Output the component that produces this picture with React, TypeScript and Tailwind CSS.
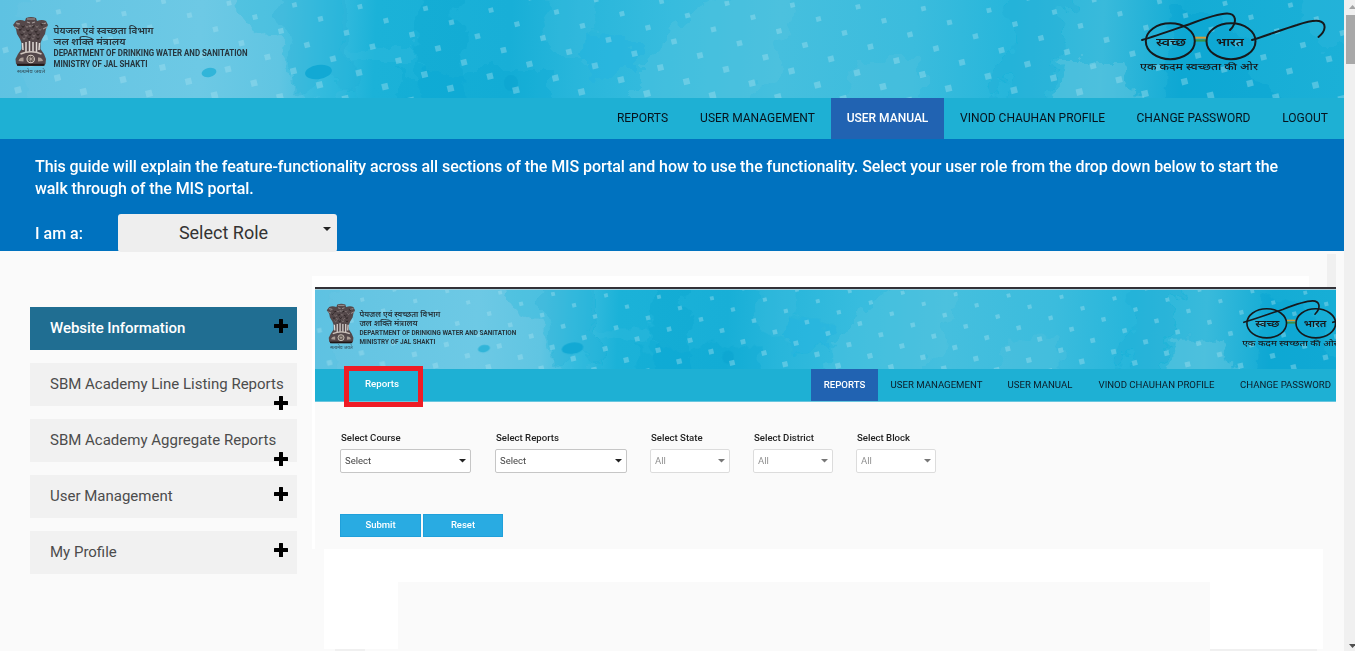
import React from "react";

const HINDI = "Roboto, 'Noto Sans Devanagari', 'Noto Sans', sans-serif";

function Emblem() {
  const manes = [
    [20, 30], [24, 32], [28, 31], [32, 31], [36, 32], [40, 30], [22, 35], [26, 36], [30, 35], [34, 36], [38, 35],
    [18, 25], [23, 27], [27, 27], [33, 27], [37, 27], [42, 25], [24, 39], [29, 39], [33, 39], [38, 39],
  ];
  return (
    <g>
      <path
        d="M26 18 Q31 16 36 18 L37 21 Q42 19 46 21 L48 25 L46 29 L45 34 L42 39 L40.500 43 L40.500 49 L44 54 L46 59 L45.500 64 L43 66 L19 66 L16 64 L15.500 59 L18 54 L21.500 49 L21.500 43 L20 39 L17 34 L16 29 L13 25 L16 21 Q20 19 25 21 Z"
        fill="#54484a"
      />
      <path d="M27 19h8M27 22l3 1m5-1l-3 1M29 26h4M16 23l4 1M46 23l-4 1M15 27l4 2M47 27l-4 2" stroke="#a39a98" strokeWidth="1.1" />
      {manes.map(([x, y], i) => (
        <path key={i} d={`M${x - 1.5} ${y - 1}q1.5 2.6 3 0`} fill="none" stroke={i % 2 ? "#8f8482" : "#1c1514"} strokeWidth="0.9" />
      ))}
      <path d="M22.500 43l.5 7M26 42v10M29.500 41v11M33 42v10M36.500 42v10M39.500 43l-.5 7" stroke="#ded8d5" strokeWidth="1.5" />
      <path d="M20.500 54q10.500-4.500 21 0" stroke="#cec4bd" strokeWidth="1.600" fill="none" />
      <circle cx="30.700" cy="59" r="3.700" fill="#4b403c" stroke="#d8cec5" strokeWidth="1.100" />
      <path d="M27.500 59h6.500M30.700 55.800v6.500M28.500 56.800l4.500 4.500M33 56.800l-4.500 4.500" stroke="#c9beb5" strokeWidth="0.600" />
      <path d="M18.500 61q1-4 5-3.500v4zM43 61q-1-4-5-3.500v4z" fill="#a99c94" />
      <path d="M17 64.800h27.500" stroke="#211817" strokeWidth="2" />
      <text x="17" y="72.500" fontSize="5" textLength="28" lengthAdjust="spacingAndGlyphs" fill="#2f4550" fontFamily={HINDI}>सत्यमेव जयते</text>
    </g>
  );
}

function Glasses() {
  return (
    <g fill="none" stroke="#16191c" strokeWidth="2" strokeLinecap="round">
      <path d="M1195 37.700h11" stroke="#d79a35" strokeWidth="2" strokeLinecap="butt" />
      <path d="M1195 40.500h11" stroke="#379247" strokeWidth="2.200" strokeLinecap="butt" />
      <ellipse cx="1170.300" cy="41.200" rx="24.500" ry="18" />
      <ellipse cx="1231" cy="41.200" rx="24.500" ry="18" />
      <path d="M1142 40C1156 36 1174 29.500 1190 24C1203 19 1218 13.500 1227 13.500C1236 13.500 1238 22 1230 30" />
      <path d="M1252 40C1265 36 1284 29 1297 25C1306 22 1314 20 1319 21C1327 23 1326 31 1318.500 37" />
      <g fill="#16191c" stroke="none" fontFamily={HINDI} fontWeight="600">
        <text x="1156" y="45.500" fontSize="11.500" textLength="30" lengthAdjust="spacingAndGlyphs">स्वच्छ</text>
        <text x="1216" y="45.500" fontSize="11.500" textLength="28" lengthAdjust="spacingAndGlyphs">भारत</text>
        <text x="1140" y="69.500" fontSize="8.800" fontWeight="500" textLength="118" lengthAdjust="spacingAndGlyphs">एक कदम स्वच्छता की ओर</text>
      </g>
    </g>
  );
}

function Banner({ id, width, shift = 0 }: { id: string; width: number; shift?: number }) {
  const dots: { x: number; y: number; s: number }[] = [];
  for (let i = -8; i < 18; i++) {
    for (let j = -4; j < 9; j++) {
      const x = 360 + 65.5 * i + 26 * j;
      const y = 6.7 + 1.75 * i + 13.9 * j;
      if (x > -10 && x < width + 10 && y > -6 && y < 104) dots.push({ x, y, s: 4.6 + y * 0.021 });
    }
  }
  return (
    <svg className="block h-full w-full" viewBox={`0 0 ${width} 98`} preserveAspectRatio="xMinYMin slice">
      <defs>
        <linearGradient id={`${id}-base`} gradientUnits="userSpaceOnUse" x1="0" y1="0" x2="1344" y2="60">
          <stop offset="0" stopColor="#62c3e2" />
          <stop offset="0.150" stopColor="#6dc9e5" />
          <stop offset="0.210" stopColor="#60c5e2" />
          <stop offset="0.240" stopColor="#3fbee0" />
          <stop offset="0.280" stopColor="#1bb2d8" />
          <stop offset="0.380" stopColor="#18afd7" />
          <stop offset="0.430" stopColor="#28b6db" />
          <stop offset="0.500" stopColor="#37bcde" />
          <stop offset="0.580" stopColor="#45bfde" />
          <stop offset="0.680" stopColor="#3bbcdd" />
          <stop offset="0.750" stopColor="#27b6db" />
          <stop offset="0.820" stopColor="#39badb" />
          <stop offset="0.880" stopColor="#14acd5" />
          <stop offset="1" stopColor="#1bb0d7" />
        </linearGradient>
        <filter id={`${id}-water`} x="-20%" y="-20%" width="140%" height="140%">
          <feTurbulence type="fractalNoise" baseFrequency="0.035" numOctaves="4" seed="5" result="n" />
          <feDisplacementMap in="SourceGraphic" in2="n" scale="44" xChannelSelector="R" yChannelSelector="G" />
        </filter>
      </defs>
      <rect width="1400" height="98" fill={`url(#${id}-base)`} />
      <g filter={`url(#${id}-water)`}>
        <path d="M-20-20h60l-20 60 10 80h-50z" fill="#55bfe0" opacity="0.300" />
        <path d="M235-20L340-20 350 120 320 120 285 60 245 25Z" fill="#25b6db" opacity="0.300" />
        <path d="M275-20L350-20 350 90 295 85Z" fill="#16abd5" opacity="0.250" />
        <path d="M420-20h40l10 140h-55z" fill="#059fce" opacity="0.220" />
        <path d="M350 45h65v18h-65z" fill="#38bcdd" opacity="0.300" />
        <path d="M400 70h150v60h-150z" fill="#08a3d0" opacity="0.220" />
        <path d="M540-20h60l-10 80h-40z" fill="#43bfe0" opacity="0.250" />
        <path d="M590 40h45v35h-45z" fill="#20b3df" opacity="0.450" />
        <path d="M640 60L740-20 800-20 780 70 720 120H640Z" fill="#5dc5e0" opacity="0.350" />
        <path d="M860 60h60v60h-80z" fill="#5dc5e0" opacity="0.250" />
        <path d="M1010-20h60l-8 60-10 80h-60l15-60z" fill="#15acd5" opacity="0.300" />
        <path d="M1065 60h60l15 60h-80z" fill="#65c8e1" opacity="0.450" />
        <path d="M1170 10h50l60 110h-120z" fill="#089fcf" opacity="0.300" />
        <path d="M1290-20h80v60h-60z" fill="#45bfdf" opacity="0.200" />
      </g>
      <ellipse cx="209" cy="72.500" rx="7.500" ry="4.500" fill="#31b5d9" transform="rotate(-12 209 72.500)" />
      <ellipse cx="318.500" cy="72" rx="13.500" ry="7" fill="#12a9d4" transform="rotate(-8 318.500 72)" />
      <ellipse cx="511" cy="83" rx="7" ry="8" fill="#0da5d0" opacity="0.700" />
      {dots.map((d, i) => (
        <rect key={i} x={-d.s / 2} y={-d.s / 2} width={d.s} height={d.s} fill="#a4e2ef" opacity="0.400" transform={`translate(${d.x} ${d.y}) rotate(-14)`} />
      ))}
      <g transform={`translate(${shift ? 1.5 : 0} 0)`}>
        <Emblem />
        <g fill="#26353d" fontFamily={HINDI}>
          <text x="53.500" y="34" fontSize="9.500" fontWeight="600" textLength="100" lengthAdjust="spacingAndGlyphs">पेयजल एवं स्वच्छता विभाग</text>
          <text x="53.500" y="45" fontSize="9.500" fontWeight="600" textLength="72" lengthAdjust="spacingAndGlyphs">जल शक्ति मंत्रालय</text>
          <text x="53.500" y="56" fontSize="9" fontWeight="700" textLength="194" lengthAdjust="spacingAndGlyphs">DEPARTMENT OF DRINKING WATER AND SANITATION</text>
          <text x="53.500" y="66.800" fontSize="9" fontWeight="700" textLength="94" lengthAdjust="spacingAndGlyphs">MINISTRY OF JAL SHAKTI</text>
        </g>
      </g>
      <g transform={`translate(${shift} 0)`}>
        <Glasses />
      </g>
    </svg>
  );
}

function Caret({ className }: { className: string }) {
  return (
    <svg className={className} viewBox="0 0 8 4">
      <path d="M0 0h8L4 4z" fill="currentColor" />
    </svg>
  );
}

function Field({ label, value, box, muted }: { label: string; value: string; box: string; muted?: boolean }) {
  return (
    <div className={box}>
      <div className="h-[18px] whitespace-nowrap pl-px text-[9.600px] font-medium leading-[13px] text-[#222]">{label}</div>
      <div
        className={`flex h-6 items-center justify-between rounded-[2px] border bg-white pl-1 pr-1 text-[9.500px] ${
          muted ? "border-[#dcdcdc] text-[#909090]" : "border-[#c6c6c6] text-[#444]"
        }`}
      >
        <span>{value}</span>
        <Caret className={`h-[3.500px] w-[7px] ${muted ? "text-[#777]" : "text-[#222]"}`} />
      </div>
    </div>
  );
}

const nav = [
  { label: "REPORTS", w: "w-[83px]" },
  { label: "USER MANAGEMENT", w: "w-[147px]" },
  { label: "USER MANUAL", w: "w-[113px]", active: true },
  { label: "VINOD CHAUHAN PROFILE", w: "w-[177px]" },
  { label: "CHANGE PASSWORD", w: "w-[145px]" },
  { label: "LOGOUT", w: "w-[78px]" },
];

const innerNav = [
  { label: "REPORTS", w: "w-[67px]", active: true },
  { label: "USER MANAGEMENT", w: "w-[117px]" },
  { label: "USER MANUAL", w: "w-[90px]" },
  { label: "VINOD CHAUHAN PROFILE", w: "w-[143px]" },
  { label: "CHANGE PASSWORD", w: "w-[108px] pl-[7px]" },
];

const menu = [
  { label: "Website Information", active: true },
  { label: "SBM Academy Line Listing Reports", low: true },
  { label: "SBM Academy Aggregate Reports", low: true },
  { label: "User Management" },
  { label: "My Profile" },
];

function Preview() {
  return (
    <div className="flex h-[376px] w-[1024px] flex-col overflow-hidden">
      <div className="h-[11px] w-[997px] shrink-0 bg-white" />
      <div className="flex h-[262px] shrink-0">
        <div className="w-[3px] shrink-0 bg-white" />
        <div className="flex w-[1021px] flex-col border-t-2 border-[#333238] bg-[#fafafa]">
          <div className="h-px shrink-0 bg-[#a5cfdc]" />
          <div className="h-[79px] shrink-0">
            <Banner id="inner" width={1263} shift={7} />
          </div>
          <div className="flex h-[33px] shrink-0 justify-between border-b border-[#68c6df] bg-[#1eb0d4]">
            <div className="relative w-[138px]">
              <div className="absolute left-[29px] top-[-3px] flex h-[41px] w-[79px] items-center justify-center border-[5px] border-[#ee1c25] pb-1 pr-[3px] text-[9.700px] font-medium text-white">
                Reports
              </div>
            </div>
            <div className="flex">
              {innerNav.map((n) => (
                <div
                  key={n.label}
                  className={`${n.w} flex items-center justify-center whitespace-nowrap text-[9.600px] ${
                    n.active ? "bg-[#2163b2] font-medium text-white" : "text-[#0b1a26]"
                  }`}
                >
                  {n.label}
                </div>
              ))}
            </div>
          </div>
          <div className="flex pl-[25px] pt-[29px]">
            <Field label="Select Course" value="Select" box="w-[131px] mr-6" />
            <Field label="Select Reports" value="Select" box="w-[132px] mr-[23px]" />
            <Field label="Select State" value="All" box="w-[80px] mr-[23px]" muted />
            <Field label="Select District" value="All" box="w-[80px] mr-[23px]" muted />
            <Field label="Select Block" value="All" box="w-[80px]" muted />
          </div>
          <div className="mt-[41px] flex gap-0.5 pl-[25px] text-[9.500px] font-medium text-white">
            <div className="flex h-[23px] w-[81px] items-center justify-center border border-[#20a0da] bg-[#29abe2]">Submit</div>
            <div className="flex h-[23px] w-[80px] items-center justify-center border border-[#20a0da] bg-[#29abe2]">Reset</div>
          </div>
        </div>
      </div>
      <div className="ml-3 flex h-[100px] w-[999px] shrink-0 flex-col bg-white pl-[74px] pt-[33px]">
        <div className="w-[812px] grow bg-[#fafafa]" />
      </div>
      <div className="flex h-[2px] shrink-0 pl-[23px]">
        <div className="w-[30px] bg-[#f0f0f0]" />
        <div className="ml-[845px] w-[107px] bg-[#f0f0f0]" />
      </div>
    </div>
  );
}

export default function App() {
  return (
    <div className="flex h-[651px] w-[1355px] overflow-hidden bg-[#fafafa] font-[Roboto,sans-serif]">
      <main className="flex w-[1344px] shrink-0 flex-col">
        <header>
          <div className="h-[98px]">
            <Banner id="top" width={1344} />
          </div>
          <nav className="flex h-[41px] justify-end bg-[#1eb0d4]">
            {nav.map((n) => (
              <a
                key={n.label}
                className={`${n.w} flex items-center justify-center whitespace-nowrap pb-px text-[12px] ${
                  n.active ? "bg-[#2163b2] font-medium text-white" : "text-[#06121c]"
                }`}
              >
                {n.label}
              </a>
            ))}
          </nav>
        </header>
        <section className="h-[112px] bg-[#0072bf] pl-[35px] pt-[17px] text-base font-medium leading-[22px] text-white">
          <p className="tracking-[-0.064px]">
            <span className="whitespace-nowrap">
              This guide will explain the feature-functionality across all sections of the MIS portal and how to use the functionality. Select your user role from the drop down below to start the
            </span>
            <br />
            walk through of the MIS portal.
          </p>
          <div className="mt-[14px] flex h-[38px] items-center">
            <span className="w-[83px] pt-0.5">I am a:</span>
            <div className="relative flex h-[38px] w-[219px] items-center justify-center rounded-[3px] bg-[#eee] pr-2 text-lg font-normal text-[#333]">
              Select Role
              <Caret className="absolute right-[6px] top-[13px] h-1 w-2 text-[#222]" />
            </div>
          </div>
        </section>
        <div className="flex">
          <aside className="flex w-[312px] shrink-0 flex-col gap-[13px] pl-[30px] pt-14">
            {menu.map((m) => (
              <div
                key={m.label}
                className={`relative flex h-[43px] w-[267px] items-center whitespace-nowrap pl-5 text-[15px] ${
                  m.active ? "bg-[#206e92] font-medium tracking-[-0.050px] text-white" : "bg-[#f1f1f1] text-[#4c4c4c]"
                }`}
              >
                {m.label}
                <svg className={`absolute right-[9px] h-[14px] w-[14px] text-black ${m.low ? "top-[33px]" : "top-3"}`} viewBox="0 0 14 14">
                  <path d="M5 .5Q5 0 5.500 0h3Q9 0 9 .5V5h4.500q.5 0 .5.500v3q0 .5-.5.500H9v4.500q0 .5-.5.500h-3q-.5 0-.5-.5V9H.500Q0 9 0 8.500v-3Q0 5 .500 5H5z" fill="currentColor" />
                </svg>
              </div>
            ))}
          </aside>
          <div className="relative pt-[25px]">
            <div className="absolute left-[1015px] top-[3px] h-[33px] w-[9px] bg-[#f0f0f0]" />
            <Preview />
          </div>
        </div>
      </main>
      <div className="flex w-[11px] shrink-0 flex-col justify-between overflow-hidden bg-[#f0f0f0]">
        <div className="pl-[2px]">
          <svg className="ml-[3px] mt-[5px] block h-1 w-[7px]" viewBox="0 0 7 4">
            <path d="M3.500 0L7 4H0z" fill="#a3a3a3" />
          </svg>
          <div className="mt-[6px] h-[49px] bg-[#a8a8a8]" />
        </div>
        <svg className="mb-[3px] ml-[5px] h-1 w-[7px]" viewBox="0 0 7 4">
          <path d="M0 0h7L3.500 4z" fill="#505050" />
        </svg>
      </div>
    </div>
  );
}
